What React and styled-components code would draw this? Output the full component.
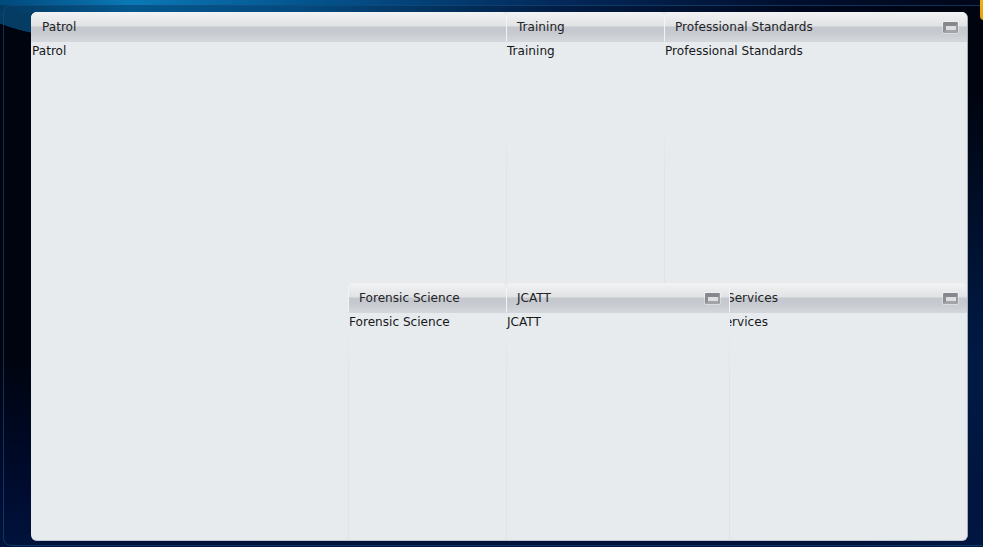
import React from "react";
import styled, { createGlobalStyle } from "styled-components";

const GlobalStyle = createGlobalStyle`
  html, body {
    margin: 0;
    height: 100%;
    background: #00040f;
  }
  #root {
    height: 100%;
  }
`;

const Screen = styled.div`
  position: relative;
  width: 983px;
  height: 547px;
  box-sizing: border-box;
  padding: 12px 15px 6px 31px;
  overflow: hidden;
  background:
    linear-gradient(90deg, #01497c 0, #0a78b6 130px, #04568f 300px, #03285a 560px, #01102f 780px, #00061a 983px) 0 0 / 100% 5px no-repeat,
    linear-gradient(90deg, #033a62 0, #03588f 130px, #034a7e 300px, #021d45 560px, #00081f 800px, #00040f 983px) 0 5px / 100% 8px no-repeat,
    radial-gradient(ellipse 147px 60px at 100px -20px, #043c64 0, #043c64 99%, rgba(4, 60, 100, 0) 100%),
    radial-gradient(ellipse 180px 280px at 1000px 370px, #001d4c 0%, rgba(0, 29, 76, 0) 100%),
    linear-gradient(180deg, #00040f 0%, #00040f 65%, #000c30 90%, #00133c 100%);
`;

const Frame = styled.div`
  position: absolute;
  inset: 5px -8px 1px 3px;
  border: 1px solid rgba(24, 80, 130, 0.6);
  border-radius: 8px;
`;

const Tab = styled.div`
  position: absolute;
  top: -6px;
  right: -6px;
  width: 9px;
  height: 26px;
  border-radius: 4px;
  background: linear-gradient(180deg, #f8b416, #e89c0c);
`;

const Board = styled.div`
  display: grid;
  grid-template-columns: 317px 158px 158px 66px 237px;
  grid-template-rows: 271px 257px;
  width: 936px;
  height: 528px;
  border-right: 1px solid #a4adb6;
  border-bottom: 1px solid #bcc4cb;
  border-radius: 6px;
  overflow: hidden;
  background: #e7ebee;
`;

const Panel = styled.section`
  grid-column: ${(p) => p.$col};
  grid-row: ${(p) => p.$row};
  z-index: ${(p) => p.$z || 1};
  margin-left: ${(p) => p.$pull || 0}px;
  min-width: 0;
  overflow: hidden;
  border-radius: 5px 5px 0 0;
  background:
    ${(p) =>
      p.$line
        ? `linear-gradient(180deg, transparent ${p.$fade}%, #e0e4e7 ${p.$fade + 20}%) 0 0 / 1px 100% no-repeat,`
        : ""}
    ${(p) =>
      p.$edge
        ? `linear-gradient(180deg, transparent ${p.$fade}%, #e0e4e7 ${p.$fade + 20}%) 100% 0 / 1px 100% no-repeat,`
        : ""}
    #e7ebee;
`;

const Header = styled.header`
  display: flex;
  align-items: center;
  justify-content: space-between;
  box-sizing: border-box;
  height: 30px;
  padding: 2px 9px 0 ${(p) => p.$inset}px;
  border-bottom: 1px solid #d3d7db;
  border-left: ${(p) => (p.$line ? "1px solid #f1f3f4" : "0 none")};
  border-right: ${(p) => (p.$edge ? "1px solid #f1f3f4" : "0 none")};
  background: linear-gradient(180deg, #f2f3f4 0%, #e0e2e4 49%, #c5c8ce 51%, #c6c9cf 70%, #d3d6da 100%);
`;

const Title = styled.span`
  font: 12.1px/1 "DejaVu Sans", sans-serif;
  color: #222326;
  white-space: nowrap;
`;

const Body = styled.div`
  padding: 1px 0 0 1px;
  font: 12.1px/16px "DejaVu Sans", sans-serif;
  color: #17181a;
  white-space: nowrap;
`;

const MinButton = styled.button`
  flex: none;
  box-sizing: border-box;
  width: 15px;
  height: 11px;
  padding: 0;
  border-style: solid;
  border-width: 4px 2px 3px 3px;
  border-color: #85878d #9a9ca1 #a2a4a8 #8b8d93;
  border-radius: 1px;
  outline: 1px solid rgba(255, 255, 255, 0.35);
  background: #dcdee0;
`;

const panels = [
  { name: "Patrol", col: "1 / 3", row: "1", inset: 11 },
  { name: "Training", col: "3 / 4", row: "1", line: true, fade: 40, inset: 10, z: 2 },
  { name: "Professional Standards", col: "4 / 6", row: "1", line: true, fade: 40, inset: 10, z: 3, min: true },
  { name: "Forensic Science", col: "2 / 3", row: "2", line: true, fade: 15, inset: 10, z: 2 },
  { name: "Services", col: "5 / 6", row: "2", pull: -14, inset: 11, z: 2, min: true },
  { name: "JCATT", col: "3 / 5", row: "2", line: true, edge: true, fade: 15, inset: 10, z: 3, min: true },
];

export default function App() {
  return (
    <Screen>
      <GlobalStyle />
      <Frame />
      <Tab />
      <Board>
        {panels.map((p) => (
          <Panel
            key={p.name}
            $col={p.col}
            $row={p.row}
            $line={p.line}
            $edge={p.edge}
            $fade={p.fade}
            $z={p.z}
            $pull={p.pull}
          >
            <Header $line={p.line} $edge={p.edge} $inset={p.inset}>
              <Title>{p.name}</Title>
              {p.min && <MinButton aria-label="Minimize" />}
            </Header>
            <Body>{p.name}</Body>
          </Panel>
        ))}
      </Board>
    </Screen>
  );
}
